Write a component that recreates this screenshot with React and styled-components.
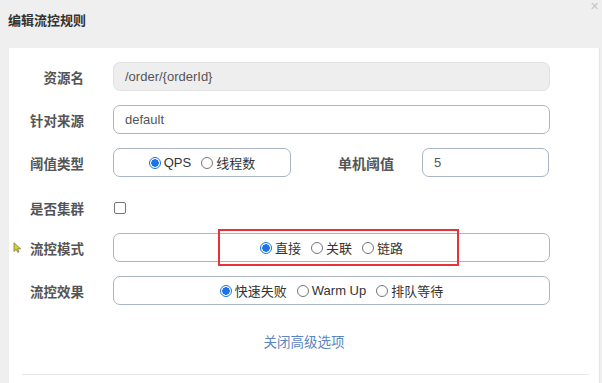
import React from "react";
import styled, { createGlobalStyle } from "styled-components";

const GlobalStyle = createGlobalStyle`
  html, body {
    margin: 0;
    padding: 0;
    background: #efefef;
  }
  body {
    font-family: "Liberation Sans", "Noto Sans CJK SC", sans-serif;
  }
`;

const Dialog = styled.div`
  width: 602px;
  height: 383px;
  overflow: hidden;
  display: flex;
  flex-direction: column;
  background: #efefef;
`;

const Header = styled.div`
  position: relative;
  height: 48px;
  box-sizing: border-box;
  padding: 12px 0 0 8px;
  flex-shrink: 0;
`;

const Title = styled.h3`
  margin: 0;
  font-size: 13px;
  font-weight: bold;
  color: #333;
  line-height: 18px;
`;

const Close = styled.span`
  position: absolute;
  left: 590px;
  top: 0;
  font-size: 11px;
  color: #c4c4c4;
`;

const Body = styled.div`
  flex: 1;
  margin: 0 2px 0 9px;
  background: #fff;
  border-right: 1px solid #e6e6e6;
  padding-top: 14px;
  display: flex;
  flex-direction: column;
`;

const Row = styled.div`
  position: relative;
  display: flex;
  align-items: center;
  height: 29px;
  margin-top: ${(p) => p.$gap ?? 14}px;
  &:first-child {
    margin-top: 0;
  }
`;

const Label = styled.label`
  width: 75px;
  margin-right: 29px;
  text-align: right;
  font-size: 13.5px;
  font-weight: bold;
  color: #555;
  flex-shrink: 0;
`;

const InlineLabel = styled(Label)`
  width: auto;
  margin: 0 28px 0 47px;
  font-size: 14px;
`;

const Input = styled.div`
  box-sizing: border-box;
  width: ${(p) => p.$width || 437}px;
  height: 29px;
  padding: 0 11px;
  display: flex;
  align-items: center;
  border: 1px solid ${(p) => (p.$disabled ? "#e2e2e2" : "#a9b5c3")};
  border-radius: 7px;
  background: ${(p) => (p.$disabled ? "#eeeeee" : "#fff")};
  font-size: 13px;
  color: #555;
`;

const RadioBox = styled(Input)`
  justify-content: center;
  gap: 10px;
  color: #333;
`;

const Option = styled.span`
  display: inline-flex;
  align-items: center;
  gap: 3px;
  font-size: 13px;
  white-space: nowrap;
`;

const Dot = styled.span`
  box-sizing: border-box;
  width: 12px;
  height: 12px;
  border-radius: 50%;
  border: 1px solid ${(p) => (p.$on ? "#1a73e8" : "#767676")};
  background: ${(p) => (p.$on ? "radial-gradient(circle, #1a73e8 0 3.5px, #fff 4px)" : "#fff")};
`;

const Check = styled.span`
  box-sizing: border-box;
  width: 12px;
  height: 12px;
  border: 1px solid #767676;
  border-radius: 2px;
  background: #fff;
  margin-left: 1px;
`;

const Highlight = styled.div`
  position: absolute;
  left: 209px;
  top: -4px;
  width: 241px;
  height: 37px;
  box-sizing: border-box;
  border: 2px solid #e8323a;
  pointer-events: none;
`;

const Cursor = styled.svg`
  position: absolute;
  left: 4px;
  top: 9px;
`;

const ToggleLink = styled.a`
  align-self: center;
  margin-top: 30px;
  font-size: 13.5px;
  line-height: 16px;
  color: #5a86c0;
  cursor: pointer;
`;

const Divider = styled.div`
  margin: 23px 10px 0 13px;
  border-top: 1px solid #e8e8e8;
`;

const Radios = ({ items, selected, width }) => (
  <RadioBox $width={width}>
    {items.map((it) => (
      <Option key={it}>
        <Dot $on={it === selected} />
        {it}
      </Option>
    ))}
  </RadioBox>
);

export default function App() {
  return (
    <>
      <GlobalStyle />
      <Dialog>
        <Header>
          <Title>编辑流控规则</Title>
          <Close>✕</Close>
        </Header>
        <Body>
          <Row>
            <Label>资源名</Label>
            <Input $disabled>/order/{"{orderId}"}</Input>
          </Row>
          <Row>
            <Label>针对来源</Label>
            <Input>default</Input>
          </Row>
          <Row>
            <Label>阈值类型</Label>
            <Radios items={["QPS", "线程数"]} selected="QPS" width={178} />
            <InlineLabel>单机阈值</InlineLabel>
            <Input $width={127}>5</Input>
          </Row>
          <Row $gap={16}>
            <Label>是否集群</Label>
            <Check />
          </Row>
          <Row $gap={11}>
            <Cursor width="9" height="11" viewBox="0 0 9 11">
              <path d="M1 0.8 L1 9.5 L3.2 7.4 L4.8 10.4 L6 9.8 L4.6 6.9 L7.6 6.8 Z" fill="#d8d23a" stroke="#6b6b2a" strokeWidth="0.7" strokeLinejoin="round" />
            </Cursor>
            <Label>流控模式</Label>
            <Radios items={["直接", "关联", "链路"]} selected="直接" />
            <Highlight />
          </Row>
          <Row>
            <Label>流控效果</Label>
            <Radios items={["快速失败", "Warm Up", "排队等待"]} selected="快速失败" />
          </Row>
          <ToggleLink>关闭高级选项</ToggleLink>
          <Divider />
        </Body>
      </Dialog>
    </>
  );
}
